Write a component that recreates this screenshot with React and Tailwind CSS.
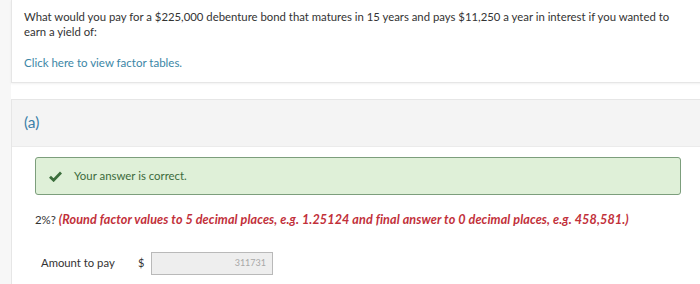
import React from 'react';

const CheckIcon = () => (
  <svg width="13" height="11" viewBox="0 0 13 11" className="shrink-0">
    <path d="M1 5.8 L4.6 9.2 L12 1.6" fill="none" stroke="#3c6e3c" strokeWidth="2.8" strokeLinejoin="miter" />
  </svg>
);

const App = () => {
  return (
    <div className="w-[700px] h-[284px] overflow-hidden bg-[#f7f7f7] font-['Lato',sans-serif] text-[#333]">
      <div className="ml-[11px] w-[720px] h-full bg-white">
        {/* question card */}
        <div className="h-[83px] border-l border-b border-[#e6e6e6] shadow-[0_1px_2px_rgba(0,0,0,0.06)] pl-3 pt-[9px]">
          <p className="text-[11.35px] leading-[15px] w-[655px]">
            What would you pay for a $225,000 debenture bond that matures in 15 years and pays $11,250 a year in interest if you wanted to earn a yield of:
          </p>
          <a className="block mt-[16px] text-[11.5px] leading-[15px] text-[#3b86a6]">Click here to view factor tables.</a>
        </div>

        {/* part (a) */}
        <div className="mt-4 border-l border-t border-[#e6e6e6] h-[200px]">
          <div className="h-[47px] bg-[#f4f4f4] border-b border-[#ebebeb] flex items-center pl-3">
            <span className="text-[15.5px] text-[#3b7fa8]">(a)</span>
          </div>

          <div className="pl-[23px] pt-[10px]">
            <div className="w-[646px] h-[38px] bg-[#dff0d8] border border-[#7c9e7c] rounded-[3px] flex items-center pl-[13px] gap-[12px]">
              <CheckIcon />
              <span className="text-[11.4px] text-[#3c6b3c]">Your answer is correct.</span>
            </div>

            <p className="mt-[18px] text-[11.4px] leading-[14px] whitespace-nowrap">
              2%? <span className="font-bold italic text-[12.6px] tracking-[0.1px] text-[#c2303a]">(Round factor values to 5 decimal places, e.g. 1.25124 and final answer to 0 decimal places, e.g. 458,581.)</span>
            </p>

            <div className="mt-[24px] pl-[6px] flex items-center h-[24px]">
              <span className="text-[11.3px] w-[97px]">Amount to pay</span>
              <span className="text-[11px] w-[13px]">$</span>
              <div className="w-[122px] h-[23px] bg-[#eeeeee] border border-[#b9b9b9] flex items-center justify-end pr-[6px]">
                <span className="text-[9px] text-[#a8a8a8]">311731</span>
              </div>
            </div>
          </div>
        </div>
      </div>
    </div>
  );
};

export default App;
